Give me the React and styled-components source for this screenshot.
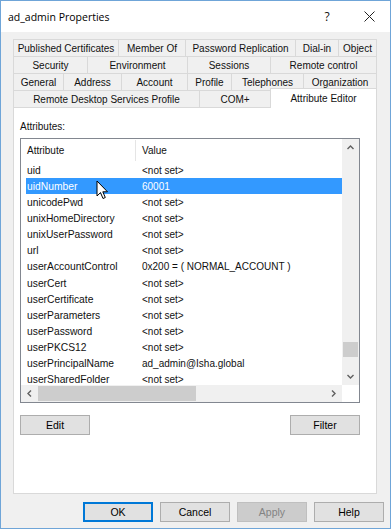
import React from 'react';
import styled, { createGlobalStyle } from 'styled-components';

const GlobalStyle = createGlobalStyle`
  html, body { margin: 0; padding: 0; background: #ffffff; }
  * { box-sizing: border-box; }
`;

const tabRows = [
  [['Published Certificates', 105], ['Member Of', 67], ['Password Replication', 110], ['Dial-in', 43], ['Object', 39]],
  [['Security', 74], ['Environment', 100], ['Sessions', 83], ['Remote control', 107]],
  [['General', 50], ['Address', 58], ['Account', 66], ['Profile', 44], ['Telephones', 72], ['Organization', 74]],
  [['Remote Desktop Services Profile', 186], ['COM+', 71], ['Attribute Editor', 107, true]],
];

const attrs = [
  ['uid', '<not set>'],
  ['uidNumber', '60001', true],
  ['unicodePwd', '<not set>'],
  ['unixHomeDirectory', '<not set>'],
  ['unixUserPassword', '<not set>'],
  ['url', '<not set>'],
  ['userAccountControl', '0x200 = ( NORMAL_ACCOUNT )'],
  ['userCert', '<not set>'],
  ['userCertificate', '<not set>'],
  ['userParameters', '<not set>'],
  ['userPassword', '<not set>'],
  ['userPKCS12', '<not set>'],
  ['userPrincipalName', 'ad_admin@Isha.global'],
  ['userSharedFolder', '<not set>'],
];

const Chevron = ({ dir }) => {
  const rot = { up: 0, down: 180, left: -90, right: 90 }[dir];
  return (
    <svg width="9" height="9" viewBox="0 0 9 9" style={{ transform: `rotate(${rot}deg)` }}>
      <path d="M1.5 6 L4.5 3 L7.5 6" fill="none" stroke="#606060" strokeWidth="1.4" />
    </svg>
  );
};

const App = () => {
  return (
    <Window>
      <GlobalStyle />
      <TitleBar>
        <Title>ad_admin Properties</Title>
        <TitleButtons>
          <TitleBtn>?</TitleBtn>
          <TitleBtn>
            <svg width="11" height="11" viewBox="0 0 11 11">
              <path d="M0.5 0.5 L10.5 10.5 M10.5 0.5 L0.5 10.5" stroke="#222" strokeWidth="1" />
            </svg>
          </TitleBtn>
        </TitleButtons>
      </TitleBar>
      <Body>
        <Tabs>
          {tabRows.map((row, i) => (
            <TabRow key={i}>
              {row.map(([label, w, sel]) => (
                <Tab key={label} $w={w} $selected={sel}>{label}</Tab>
              ))}
            </TabRow>
          ))}
        </Tabs>
        <Panel>
          <Label>Attributes:</Label>
          <ListBox>
            <ListMain>
              <Header>
                <HeadCell $w={115}>Attribute</HeadCell>
                <HeadCell>Value</HeadCell>
              </Header>
              <Rows>
                {attrs.map(([name, value, sel]) => (
                  <Row key={name} $selected={sel}>
                    <NameCell>{name}</NameCell>
                    <ValueCell>{value}</ValueCell>
                  </Row>
                ))}
              </Rows>
              <Cursor width="13" height="20" viewBox="0 0 13 20">
                <path d="M1 1 L1 16 L4.5 12.6 L7 18.5 L9.3 17.5 L6.8 11.8 L11.5 11.8 Z" fill="#fff" stroke="#000" strokeWidth="1" strokeLinejoin="round" />
              </Cursor>
            </ListMain>
            <VScroll>
              <ArrowBtn><Chevron dir="up" /></ArrowBtn>
              <VTrack>
                <VThumb $top={186} />
              </VTrack>
              <ArrowBtn><Chevron dir="down" /></ArrowBtn>
            </VScroll>
            <HScroll>
              <ArrowBtn><Chevron dir="left" /></ArrowBtn>
              <HTrack>
                <HThumb $w={158} />
              </HTrack>
              <ArrowBtn><Chevron dir="right" /></ArrowBtn>
            </HScroll>
            <Corner />
          </ListBox>
          <ActionRow>
            <Button>Edit</Button>
            <Button>Filter</Button>
          </ActionRow>
        </Panel>
        <Footer>
          <Button $default>OK</Button>
          <Button>Cancel</Button>
          <Button $disabled>Apply</Button>
          <Button>Help</Button>
        </Footer>
      </Body>
    </Window>
  );
};

const Window = styled.div`
  width: 391px;
  height: 529px;
  border: 1px solid #6fa5d8;
  display: flex;
  flex-direction: column;
  background: #f0f0f0;
  font-family: "Liberation Sans", Arial, sans-serif;
  font-size: 10px;
  color: #111;
  overflow: hidden;
`;

const TitleBar = styled.div`
  height: 31px;
  background: #ffffff;
  display: flex;
  align-items: center;
  justify-content: space-between;
  padding-left: 7px;
`;

const Title = styled.div`
  font-family: "Open Sans", "Noto Sans", sans-serif;
  font-size: 10.5px;
  color: #000;
`;

const TitleButtons = styled.div`
  display: flex;
  height: 100%;
`;

const TitleBtn = styled.div`
  width: 42px;
  height: 100%;
  display: flex;
  align-items: center;
  justify-content: center;
  font-family: "Open Sans", "Noto Sans", sans-serif;
  font-size: 12px;
  color: #111;
`;

const Body = styled.div`
  flex: 1;
  display: flex;
  flex-direction: column;
  padding: 7px 12px 0 12px;
`;

const Tabs = styled.div`
  width: 364px;
  display: flex;
  flex-direction: column;
`;

const TabRow = styled.div`
  display: flex;
  height: 17px;
  align-items: flex-end;
`;

const Tab = styled.div`
  width: ${p => p.$w}px;
  height: ${p => (p.$selected ? '20px' : '17px')};
  margin-bottom: ${p => (p.$selected ? '-1px' : '0')};
  position: relative;
  z-index: ${p => (p.$selected ? 2 : 0)};
  background: ${p => (p.$selected ? '#ffffff' : '#f0f0f0')};
  border-top: 1px solid #d9d9d9;
  border-left: 1px solid #d9d9d9;
  border-right: ${p => (p.$selected ? '1px solid #d9d9d9' : 'none')};
  &:last-child { border-right: 1px solid #d9d9d9; }
  display: flex;
  justify-content: center;
  align-items: ${p => (p.$selected ? 'flex-start' : 'center')};
  padding-top: ${p => (p.$selected ? '4px' : '1px')};
  font-size: 10px;
  white-space: nowrap;
`;

const Panel = styled.div`
  width: 364px;
  height: 387px;
  background: #ffffff;
  border: 1px solid #d9d9d9;
  padding: 13px 0 0 6px;
  display: flex;
  flex-direction: column;
`;

const Label = styled.div`
  height: 12px;
  line-height: 12px;
  margin-bottom: 5px;
`;

const ListBox = styled.div`
  width: 340px;
  height: 265px;
  border: 1px solid #828790;
  display: grid;
  grid-template-columns: 1fr 17px;
  grid-template-rows: 1fr 17px;
`;

const ListMain = styled.div`
  position: relative;
  overflow: hidden;
  display: flex;
  flex-direction: column;
`;

const Header = styled.div`
  height: 23px;
  flex-shrink: 0;
  display: flex;
  align-items: stretch;
`;

const HeadCell = styled.div`
  width: ${p => (p.$w ? `${p.$w}px` : 'auto')};
  flex: ${p => (p.$w ? 'none' : '1')};
  display: flex;
  align-items: center;
  padding-left: 6px;
  border-right: ${p => (p.$w ? '1px solid #e5e5e5' : 'none')};
  margin: 1px 0;
`;

const Rows = styled.div`
  display: flex;
  flex-direction: column;
`;

const Row = styled.div`
  height: 16.15px;
  flex-shrink: 0;
  display: flex;
  align-items: center;
  margin-left: 5px;
  background: ${p => (p.$selected ? '#3399ff' : 'transparent')};
  color: ${p => (p.$selected ? '#ffffff' : '#111')};
  white-space: nowrap;
`;

const NameCell = styled.div`
  width: 116px;
  padding-left: 1px;
  font-size: 10.3px;
`;

const ValueCell = styled.div`
  flex: 1;
`;

const Cursor = styled.svg`
  position: absolute;
  left: 75px;
  top: 41px;
`;

const VScroll = styled.div`
  background: #f0f0f0;
  display: flex;
  flex-direction: column;
`;

const HScroll = styled.div`
  background: #f0f0f0;
  display: flex;
`;

const Corner = styled.div`
  background: #ffffff;
`;

const ArrowBtn = styled.div`
  width: 17px;
  height: 17px;
  flex-shrink: 0;
  display: flex;
  align-items: center;
  justify-content: center;
`;

const VTrack = styled.div`
  flex: 1;
`;

const VThumb = styled.div`
  margin: ${p => p.$top}px 0 0 1px;
  width: 15px;
  height: 15px;
  background: #cdcdcd;
`;

const HTrack = styled.div`
  flex: 1;
  display: flex;
  align-items: center;
`;

const HThumb = styled.div`
  width: ${p => p.$w}px;
  height: 15px;
  background: #cdcdcd;
`;

const ActionRow = styled.div`
  width: 340px;
  display: flex;
  justify-content: space-between;
  margin-top: 12px;
`;

const Button = styled.div`
  width: 70px;
  height: 20px;
  display: flex;
  align-items: center;
  justify-content: center;
  background: ${p => (p.$disabled ? '#cccccc' : '#e1e1e1')};
  border: ${p => (p.$default ? '2px solid #0078d7' : `1px solid ${p.$disabled ? '#bfbfbf' : '#adadad'}`)};
  color: ${p => (p.$disabled ? '#838383' : '#000')};
  font-size: 10.5px;
`;

const Footer = styled.div`
  display: flex;
  justify-content: flex-end;
  gap: 7px;
  margin-top: 8px;
  margin-right: -6px;
`;

export default App;
